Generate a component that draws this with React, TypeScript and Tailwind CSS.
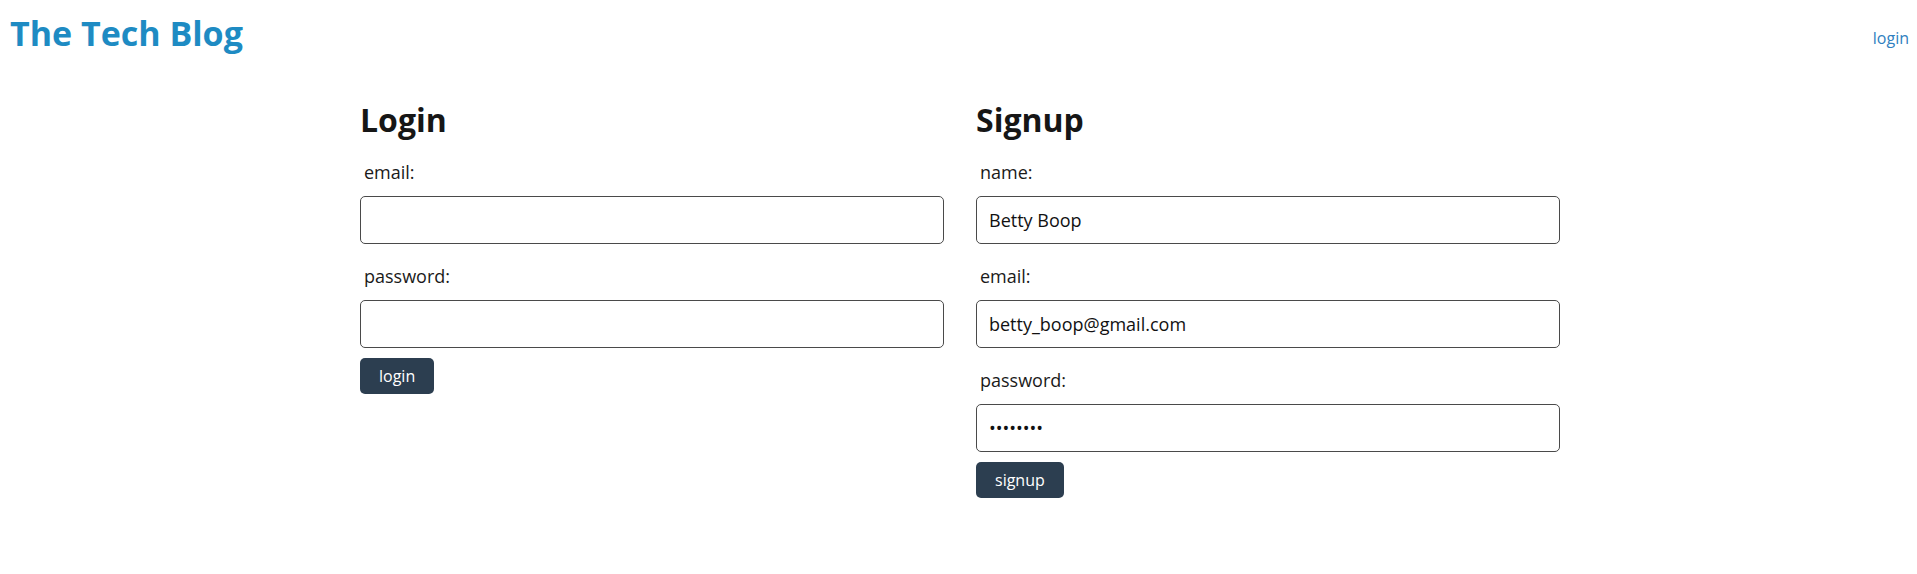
import React from 'react';

const font = { fontFamily: '"Open Sans", "Noto Sans", Arial, sans-serif' };

interface FieldProps {
  label: string;
  type?: string;
  value?: string;
}

function Field({ label, type = 'text', value }: FieldProps) {
  return (
    <div className="mt-[20px] first:mt-[17px]">
      <label className="block pl-1 text-[18px] leading-[24px] text-[#1a1a1a]">{label}</label>
      <input
        type={type}
        defaultValue={value}
        className="mt-[12px] block h-[48px] w-full rounded-[5px] border border-[#4a4a4a] bg-white px-[12px] text-[18px] text-[#111] outline-none"
      />
    </div>
  );
}

function FormColumn({ title, fields, button }: { title: string; fields: FieldProps[]; button: string }) {
  return (
    <section className="w-[584px]">
      <h2 className="text-[32px] font-bold leading-[40px] text-[#161616]">{title}</h2>
      {fields.map((f) => (
        <Field key={f.label} {...f} />
      ))}
      <button className="mt-[10px] h-[36px] rounded-[5px] bg-[#2c3e50] px-[19px] text-[16px] text-white">
        {button}
      </button>
    </section>
  );
}

export default function App() {
  return (
    <div className="min-h-screen bg-white" style={font}>
      <header className="flex items-start justify-between pt-[9px] pl-[10px] pr-[8px]">
        <h1 className="text-[34px] font-bold leading-[48px] text-[#1e8bc3]">The Tech Blog</h1>
        <a href="#" className="mt-[17px] text-[16px] leading-[24px] text-[#2f80c0]">
          login
        </a>
      </header>
      <main className="flex gap-[32px] pl-[360px] pt-[43px]">
        <FormColumn
          title="Login"
          fields={[{ label: 'email:' }, { label: 'password:', type: 'password' }]}
          button="login"
        />
        <FormColumn
          title="Signup"
          fields={[
            { label: 'name:', value: 'Betty Boop' },
            { label: 'email:', value: 'betty_boop@gmail.com' },
            { label: 'password:', type: 'password', value: 'password' },
          ]}
          button="signup"
        />
      </main>
    </div>
  );
}
